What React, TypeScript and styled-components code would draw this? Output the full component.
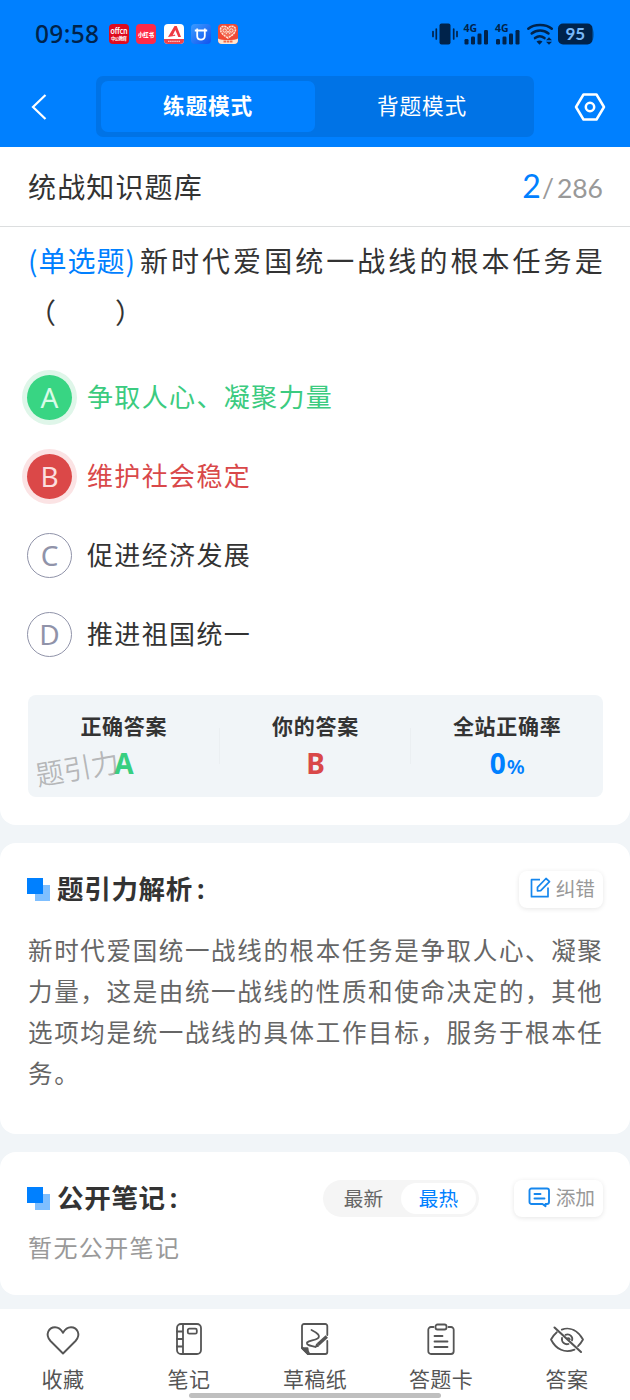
import React from 'react';
import styled, { createGlobalStyle, css } from 'styled-components';

const cjk = `"Noto Sans CJK SC", sans-serif`;
const latin = `"Noto Sans", "Noto Sans CJK SC", sans-serif`;

const Global = createGlobalStyle`
  * { box-sizing: border-box; }
  body { margin: 0; background: #f1f5f8; font-family: ${cjk}; color: #333; }
  button { border: 0; background: none; padding: 0; margin: 0; font: inherit; color: inherit; }
  svg { display: block; flex: none; overflow: visible; }
`;

const Page = styled.div`
  width: 630px;
  height: 1400px;
  display: flex;
  flex-direction: column;
  overflow: hidden;
  background: #f1f5f8;
`;

const Header = styled.header`
  height: 147px;
  flex: none;
  background: #0080ff;
`;

const StatusBar = styled.div`
  height: 76px;
  display: flex;
  align-items: center;
  justify-content: space-between;
  padding: 0 35px 8px;
`;

const StatusGroup = styled.div`
  display: flex;
  align-items: center;
`;

const Clock = styled.span`
  font: 500 24.5px/30px ${latin};
  letter-spacing: 0.35px;
  color: #00234b;
  width: 74px;
`;

const AppIcons = styled.div`
  display: flex;
  gap: 7.3px;
`;

const ModeBar = styled.div`
  display: flex;
  align-items: center;
  padding: 0 24px 0 31px;
`;

const Segments = styled.div`
  width: 438px;
  height: 61px;
  margin: 0 auto 0 49px;
  padding: 5px;
  display: flex;
  border-radius: 7px;
  background: #0073e6;
`;

const Segment = styled.button<{ $active?: boolean }>`
  flex: 1;
  border-radius: 7px;
  padding-bottom: 4px;
  font-size: 21.7px;
  line-height: 46px;
  letter-spacing: 0.8px;
  color: #fff;
  font-weight: ${(p) => (p.$active ? 700 : 400)};
  background: ${(p) => (p.$active ? '#0080ff' : 'transparent')};
`;

const Question = styled.section`
  height: 678px;
  flex: none;
  background: #fff;
  border-radius: 0 0 16px 16px;
`;

const TitleRow = styled.div`
  height: 80px;
  padding: 0 27px 2px 28px;
  display: flex;
  align-items: center;
  justify-content: space-between;
  border-bottom: 1px solid #dcdedf;
`;

const Title = styled.h1`
  margin: 0;
  font-size: 28px;
  font-weight: 400;
  letter-spacing: 1.15px;
`;

const Progress = styled.div`
  display: flex;
  align-items: baseline;
  padding-top: 2px;
  font: 400 26.5px/40px Lato, sans-serif;
  color: #999;
`;

const Current = styled.span`
  font-size: 32px;
  color: #0080ff;
`;

const Slash = styled.span`
  margin: 0 3px 0 1px;
`;

const Stem = styled.p`
  margin: 7px 0 0 28px;
  font-size: 28px;
  line-height: 52px;
  white-space: nowrap;
  letter-spacing: 3.05px;
`;

const Kind = styled.span`
  color: #0080ff;
  letter-spacing: 1px;
  margin-right: 4px;
`;

const Blank = styled.span`
  display: flex;
  gap: 56px;
  margin-left: 0;
`;

const Options = styled.ul`
  list-style: none;
  margin: 37px 0 0;
  padding: 0 0 0 27px;
  display: flex;
  flex-direction: column;
  gap: 34px;
`;

type State = 'right' | 'wrong' | 'idle';

const optionColor = { right: '#3bcb80', wrong: '#d94849', idle: '#333' };

const Option = styled.li<{ $state: State }>`
  height: 45px;
  display: flex;
  align-items: center;
  gap: 15px;
  font-size: 26px;
  letter-spacing: 1.35px;
  color: ${(p) => optionColor[p.$state]};
`;

const OptionText = styled.span`
  padding-bottom: 4px;
`;

const Letter = styled.span<{ $state: State }>`
  width: 45px;
  height: 45px;
  border-radius: 50%;
  text-align: center;
  font: 400 28px/45px ${latin};
  letter-spacing: 0;
  ${(p) =>
    p.$state === 'idle'
      ? css`
          border: 1.5px solid #9093a9;
          color: #9093a9;
          line-height: 43px;
        `
      : css`
          color: ${p.$state === 'right' ? '#d9fbe8' : '#fbdede'};
          background: ${p.$state === 'right' ? '#38d583' : '#db4848'};
          box-shadow: 0 0 0 5px ${p.$state === 'right' ? '#dff6e9' : '#fbe3e4'};
        `}
`;

const Stats = styled.div`
  position: relative;
  margin: 38px 27px 0 28px;
  height: 102px;
  display: flex;
  border-radius: 8px;
  background: #f1f5f8;
`;

const Stat = styled.div`
  flex: 1;
  padding-top: 14px;
  text-align: center;
  background: linear-gradient(#ebeff2, #ebeff2) right 33px / 1px 36px no-repeat;
  &:last-of-type { background: none; }
`;

const StatName = styled.div`
  font-size: 21px;
  line-height: 32px;
  font-weight: 700;
  letter-spacing: 0.7px;
`;

const StatValue = styled.div<{ $color: string }>`
  margin-top: 1px;
  font: 700 28px/42px ${latin};
  color: ${(p) => p.$color};
`;

const Percent = styled.span`
  margin-left: 1px;
  font-size: 20.5px;
  font-weight: 600;
`;

const Watermark = styled.span`
  position: absolute;
  left: 7px;
  top: 52px;
  font-size: 28px;
  line-height: 40px;
  font-weight: 350;
  color: rgba(130, 130, 130, 0.55);
  transform: rotate(-10deg);
`;

const Card = styled.section<{ $height: number; $top: number }>`
  height: ${(p) => p.$height}px;
  margin-top: ${(p) => p.$top}px;
  padding: 26px 27px 0;
  flex: none;
  border-radius: 16px;
  background: #fff;
`;

const CardHead = styled.div`
  height: 40px;
  display: flex;
  align-items: center;
`;

const Marker = styled.span`
  width: 23px;
  height: 23px;
  margin-right: 7px;
  background:
    linear-gradient(#0080ff, #0080ff) 0 0 / 16px 16px no-repeat,
    linear-gradient(#7fbfff, #7fbfff) 8px 7px / 15px 16px no-repeat;
`;

const CardTitle = styled.h2`
  margin: 0 auto 0 0;
  padding-bottom: 4px;
  font-size: 26.5px;
  font-weight: 700;
  letter-spacing: 0.7px;
`;

const Colon = styled.span`
  font-family: ${latin};
  margin-left: 4px;
`;

const Action = styled.button<{ $width: number }>`
  width: ${(p) => p.$width}px;
  height: 37px;
  display: flex;
  align-items: center;
  justify-content: flex-end;
  padding: 0 8px 3px 0;
  gap: 5px;
  border-radius: 8px;
  box-shadow: 0 1px 5px rgba(0, 0, 0, 0.1);
  font-size: 19.7px;
  color: #999;
`;

const Body = styled.p`
  margin: 20px 0 0 1px;
  font-size: 24.5px;
  line-height: 41px;
  letter-spacing: 1.66px;
  color: #666;
  white-space: nowrap;
`;

const Empty = styled.p`
  margin: 10px 0 0 1px;
  font-size: 24px;
  line-height: 38px;
  letter-spacing: 1.4px;
  color: #999;
`;

const Sort = styled.div`
  display: flex;
  width: 156px;
  height: 37px;
  margin-right: 35px;
  padding: 3px;
  border-radius: 19px;
  background: #f5f5f5;
`;

const SortItem = styled.button<{ $active?: boolean }>`
  flex: 1;
  border-radius: 16px;
  font-size: 19.7px;
  line-height: 30px;
  color: ${(p) => (p.$active ? '#0080ff' : '#666')};
  background: ${(p) => (p.$active ? '#fff' : 'transparent')};
`;

const Nav = styled.nav`
  position: relative;
  height: 91px;
  margin-top: 14px;
  flex: none;
  display: flex;
  background: #fff;
`;

const NavItem = styled.button`
  flex: 1;
  display: flex;
  flex-direction: column;
  align-items: center;
  padding-top: 13px;
  gap: 6px;
  font-size: 21px;
  line-height: 32px;
  letter-spacing: 0.4px;
  color: #555;
`;

const HomeIndicator = styled.span`
  position: absolute;
  left: 189px;
  bottom: 2px;
  width: 252px;
  height: 5px;
  border-radius: 3px;
  background: #bfbfbf;
`;

function LauncherIcons() {
  return (
    <AppIcons>
      <svg width="20" height="20" viewBox="0 0 20 20">
        <rect width="20" height="20" rx="4" fill="#df0b1d" />
        <text x="10" y="10" fontSize="8.5" fontWeight="700" fill="#fff" textAnchor="middle" textLength="17" lengthAdjust="spacingAndGlyphs" fontFamily="Lato">offcn</text>
        <text x="10" y="16.4" fontSize="4.5" fontWeight="700" fill="#fff" textAnchor="middle" textLength="16" fontFamily="Noto Sans CJK SC">中公教育</text>
      </svg>
      <svg width="20" height="20" viewBox="0 0 20 20">
        <rect width="20" height="20" rx="4" fill="#ff2947" />
        <text x="10" y="12.7" fontSize="6.2" fontWeight="900" fill="#fff" textAnchor="middle" textLength="16" lengthAdjust="spacingAndGlyphs" fontFamily="Noto Sans CJK SC">小红书</text>
      </svg>
      <svg width="20" height="20" viewBox="0 0 20 20">
        <rect width="20" height="20" rx="4" fill="#fff" />
        <path d="M0 15h20v1a4 4 0 0 1-4 4H4a4 4 0 0 1-4-4z" fill="#f0444b" />
        <path d="M4 13 10.5 2h2.2L17 13h-2.7l-3-7-2.6 5.5 2-1 .7 1.2z" fill="#ee3a42" />
        <path d="M4 17.3h12" stroke="#fbc4c4" strokeWidth="1.3" strokeDasharray="1.5 .6" />
      </svg>
      <svg width="20" height="20" viewBox="0 0 20 20">
        <defs>
          <linearGradient id="u" x1="0" y1="0" x2="1" y2="1">
            <stop stopColor="#3b9cff" />
            <stop offset="1" stopColor="#1252ee" />
          </linearGradient>
        </defs>
        <rect width="20" height="20" rx="4" fill="url(#u)" />
        <path d="M6.200 6.500v5.500c0 4.800 7.600 4.800 7.600 0V6.500M3.800 6.500h12.400M6.200 4.500v2M13.800 4.500v2" fill="none" stroke="#fff" strokeWidth="1.800" />
      </svg>
      <svg width="20" height="20" viewBox="0 0 20 20">
        <rect width="20" height="20" rx="4" fill="#f04a35" />
        <path d="M10 14C5 11 2.5 8.500 2.500 5.500 2.500 1.500 8 1 10 4.500 12 1 17.500 1.500 17.500 5.500 17.500 8.500 15 11 10 14z" fill="#f36c55" stroke="#ffe3d5" strokeWidth="1.5" strokeDasharray="2.2 .7" />
        <circle cx="6.7" cy="6.5" r="1.7" fill="none" stroke="#ffe3d5" />
        <circle cx="13.300" cy="6.500" r="1.700" fill="none" stroke="#ffe3d5" />
        <path d="M8 10l2-3 2 3" fill="none" stroke="#ffe3d5" />
        <path d="M0 14.500c3 2 17 2 20 0V16a4 4 0 0 1-4 4H4a4 4 0 0 1-4-4z" fill="#ffe5cf" />
        <path d="M5.500 17.500h9" stroke="#f26b4b" strokeWidth="2" strokeDasharray="2.600 .6" />
      </svg>
    </AppIcons>
  );
}

function DeviceStatus() {
  const ink = '#00234b';
  return (
    <svg width="164" height="24" viewBox="431 22 164 24" fill={ink}>
      <rect x="439.500" y="23.500" width="11" height="21" rx="2" />
      <path d="M433 31.500v5M436.300 29v10M453.700 29v10M457 31.500v5" stroke={ink} strokeWidth="1.700" strokeLinecap="round" />
      {[464.500, 496].map((x) => (
        <g key={x}>
          <text x={x - 1} y="31.700" fontSize="10.200" fontWeight="700" textLength="13.500" lengthAdjust="spacingAndGlyphs" fontFamily="Noto Sans">4G</text>
          <rect x={x} y="39" width="4" height="5.500" rx="1.200" />
          <rect x={x + 6.500} y="36.500" width="4" height="8" rx="1.200" />
          <rect x={x + 13} y="33.500" width="4" height="11" rx="1.200" />
          <rect x={x + 19.500} y="30" width="4" height="14.500" rx="1.200" />
        </g>
      ))}
      <g fill="none" stroke={ink} strokeWidth="2.500" strokeLinecap="round">
        <path d="M528.300 28.700c6-5 17.500-5 23.500 0" />
        <path d="M531.700 33.500c5-4 11.800-4 16.800 0" />
        <path d="M535 38.100c3-2.400 6.500-2.400 9.500 0" />
      </g>
      <path d="M536.500 41.500q3-2 6 0l-3 3.300zM546 40.200l3-3 3 3zM546 41.700l3 3 3-3z" />
      <path d="M591 28c4 1 4 12 0 13z" fill="#0060bb" />
      <rect x="558" y="23.500" width="34.500" height="21" rx="5" />
      <text x="575.300" y="40.300" fontSize="17" fontWeight="700" fill="#79b9fa" textAnchor="middle" textLength="19.500" fontFamily="Lato">95</text>
    </svg>
  );
}

const stroke = { fill: 'none', stroke: '#555', strokeWidth: 1.8, strokeLinecap: 'round', strokeLinejoin: 'round' } as const;

const navItems = [
  {
    label: '收藏',
    icon: <path d="M17 31.500 4.500 19C-1.500 12.500 3 5.200 9 5.200c4 0 6 2 8 5.600 2-3.600 4-5.600 8-5.600 6 0 10.500 7.300 4.500 13.800z" strokeWidth="1.900" />,
  },
  {
    label: '笔记',
    icon: (
      <>
        <rect x="5" y="2" width="24" height="30" rx="4" />
        <path d="M11 2v30M5 9.500h6M5 17h6M5 24.500h6" />
        <rect x="15.800" y="6.700" width="9" height="5" rx="1.500" />
      </>
    ),
  },
  {
    label: '草稿纸',
    icon: (
      <>
        <path d="M29.300 13V4a2 2 0 0 0-2-2H6a2 2 0 0 0-2 2v22l6 6h17.300a2 2 0 0 0 2-2V19" />
        <path d="M4 25.500c2 1 4 .7 5.500.6 0 2 .2 4 2 5.900H10l-6-6z" fill="#555" />
        <path d="M13.500 8c6 3 9.500 6 6 8.500-3 2-8 2-10.500 4-1 3 5 3.200 8.500 4.500" />
        <path d="M20 22.500 28.800 14.500" strokeWidth="3.500" strokeLinecap="butt" />
        <path d="M18 24.500l.8-2 1.300 1.300z" />
      </>
    ),
  },
  {
    label: '答题卡',
    icon: (
      <>
        <path d="M9.500 5H7a2.700 2.700 0 0 0-2.700 2.700v21.600A2.700 2.700 0 0 0 7 32h20a2.700 2.700 0 0 0 2.700-2.700V7.700A2.700 2.700 0 0 0 27 5h-2.500" />
        <rect x="11.500" y="2.500" width="11" height="5" rx="2" />
        <path d="M10.500 14h8M10.500 19.500h13M10.500 25h13" />
      </>
    ),
  },
  {
    label: '答案',
    icon: (
      <>
        <path d="M4.500 5.500 31 30" strokeWidth="2.100" />
        <path d="M11.800 7.600c8.500-3.200 16.200 1.300 21.200 9.900a27 27 0 0 1-5 6.600M24.500 27.600C15 31.600 6 27.500 1 17.500a26 26 0 0 1 5.800-7.200" />
        <path d="M15.500 12.800c4.700-1.600 7.700 2.500 6.500 5.600M12 16c-.8 4.400 3.200 7 6.500 6M17.500 16.300c1.200-.4 2 .2 2.300 1" />
      </>
    ),
  },
];

const options: { key: string; text: string; state: State }[] = [
  { key: 'A', text: '争取人心、凝聚力量', state: 'right' },
  { key: 'B', text: '维护社会稳定', state: 'wrong' },
  { key: 'C', text: '促进经济发展', state: 'idle' },
  { key: 'D', text: '推进祖国统一', state: 'idle' },
];

export default function App() {
  return (
    <Page>
      <Global />
      <Header>
        <StatusBar>
          <StatusGroup>
            <Clock>09:58</Clock>
            <LauncherIcons />
          </StatusGroup>
          <DeviceStatus />
        </StatusBar>
        <ModeBar>
          <svg width="16" height="26" viewBox="0 0 16 26" fill="none" stroke="#fff" strokeWidth="2.200">
            <path d="M14.500 1 2 13l12.500 12" />
          </svg>
          <Segments>
            <Segment $active>练题模式</Segment>
            <Segment>背题模式</Segment>
          </Segments>
          <svg width="32" height="28" viewBox="0 0 32 28" fill="none" stroke="#fff" strokeWidth="2.500" strokeLinejoin="round">
            <path d="M9.500 1.500h13L30 14l-7.500 12.500h-13L2 14z" />
            <circle cx="16" cy="14" r="4.200" />
          </svg>
        </ModeBar>
      </Header>

      <Question>
        <TitleRow>
          <Title>统战知识题库</Title>
          <Progress>
            <Current>2</Current>
            <Slash>/</Slash>286
          </Progress>
        </TitleRow>
        <Stem>
          <Kind>(单选题)</Kind>新时代爱国统一战线的根本任务是
          <Blank>
            <span>（</span>
            <span>）</span>
          </Blank>
        </Stem>
        <Options>
          {options.map((o) => (
            <Option key={o.key} $state={o.state}>
              <Letter $state={o.state}>{o.key}</Letter>
              <OptionText>{o.text}</OptionText>
            </Option>
          ))}
        </Options>
        <Stats>
          <Stat>
            <StatName>正确答案</StatName>
            <StatValue $color="#38cf80">A</StatValue>
          </Stat>
          <Stat>
            <StatName>你的答案</StatName>
            <StatValue $color="#d94849">B</StatValue>
          </Stat>
          <Stat>
            <StatName>全站正确率</StatName>
            <StatValue $color="#0080ff">
              0<Percent>%</Percent>
            </StatValue>
          </Stat>
          <Watermark>题引力</Watermark>
        </Stats>
      </Question>

      <Card $height={291} $top={18}>
        <CardHead>
          <Marker />
          <CardTitle>
            题引力解析<Colon>:</Colon>
          </CardTitle>
          <Action $width={84}>
            <svg width="21" height="21" viewBox="0 0 21 21" fill="none" stroke="#1687ee" strokeWidth="1.700" strokeLinejoin="round">
              <path d="M10 2.700H1.500v17h16.500V10.500" />
              <path d="M7.500 10.300 16 1.500l3.500 3.200-8.800 9-3.200.2z" />
            </svg>
            纠错
          </Action>
        </CardHead>
        <Body>
          新时代爱国统一战线的根本任务是争取人心、凝聚
          <br />
          力量，这是由统一战线的性质和使命决定的，其他
          <br />
          选项均是统一战线的具体工作目标，服务于根本任
          <br />
          务。
        </Body>
      </Card>

      <Card $height={143} $top={18}>
        <CardHead>
          <Marker />
          <CardTitle>
            公开笔记<Colon>:</Colon>
          </CardTitle>
          <Sort>
            <SortItem>最新</SortItem>
            <SortItem $active>最热</SortItem>
          </Sort>
          <Action $width={89}>
            <svg width="23" height="21" viewBox="0 0 23 21" fill="none" stroke="#1687ee" strokeWidth="1.900" strokeLinejoin="round" strokeLinecap="round">
              <path d="M14.500 18H3.500a2 2 0 0 1-2-2V4.500a2 2 0 0 1 2-2H19a2 2 0 0 1 2 2V16a2 2 0 0 1-2 2h-1.500v2.300z" />
              <path d="M6.500 8h6M6.500 12.500h10" />
            </svg>
            添加
          </Action>
        </CardHead>
        <Empty>暂无公开笔记</Empty>
      </Card>

      <Nav>
        {navItems.map((item) => (
          <NavItem key={item.label}>
            <svg width="34" height="34" viewBox="0 0 34 34" {...stroke}>
              {item.icon}
            </svg>
            {item.label}
          </NavItem>
        ))}
        <HomeIndicator />
      </Nav>
    </Page>
  );
}
